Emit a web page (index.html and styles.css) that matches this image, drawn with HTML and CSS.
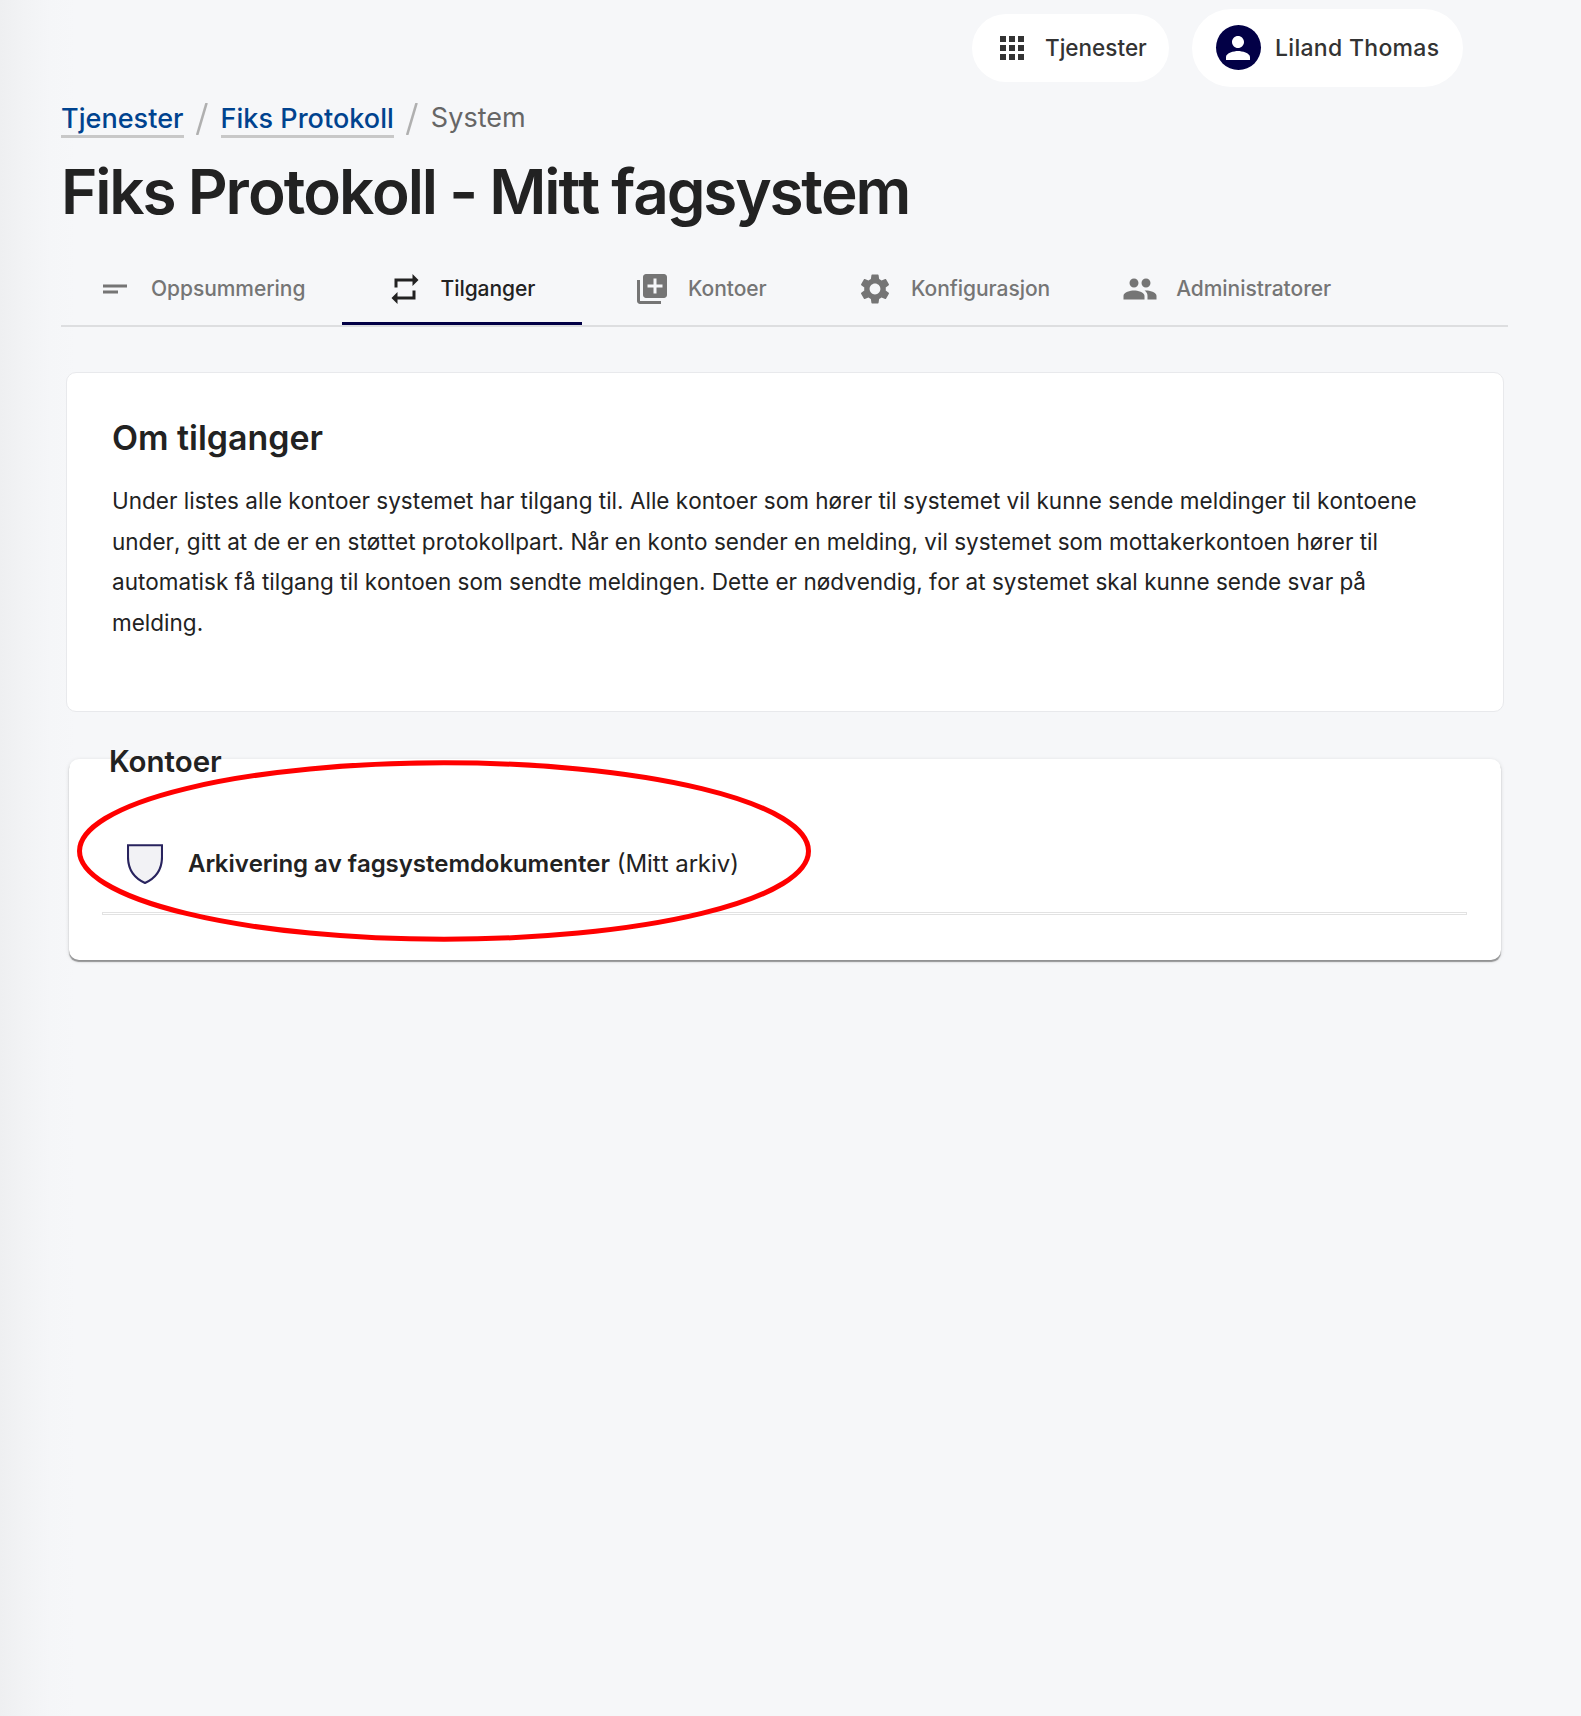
FILE: index.html
```html
<!DOCTYPE html>
<html lang="nb">
<head>
<meta charset="utf-8">
<title>Fiks Protokoll - Mitt fagsystem</title>
<link rel="stylesheet" href="styles.css">
</head>
<body>
<header class="topbar">
  <a class="pill pill-services">
    <svg class="icon" viewBox="0 0 24 24"><path d="M4 8h4V4H4v4zm6 12h4v-4h-4v4zm-6 0h4v-4H4v4zm0-6h4v-4H4v4zm6 0h4v-4h-4v4zm6-10v4h4V4h-4zm-6 4h4V4h-4v4zm6 6h4v-4h-4v4zm0 6h4v-4h-4v4z"/></svg>
    <span class="services-label">Tjenester</span>
  </a>
  <a class="pill pill-user">
    <span class="avatar"><svg class="icon" viewBox="0 0 24 24"><path d="M12 12c2.21 0 4-1.79 4-4s-1.79-4-4-4-4 1.79-4 4 1.79 4 4 4zm0 2c-2.67 0-8 1.34-8 4v2h16v-2c0-2.66-5.33-4-8-4z"/></svg></span>
    <span class="user-name">Liland Thomas</span>
  </a>
</header>
<main class="page">
  <nav class="breadcrumb">
    <a class="crumb-link">Tjenester</a>
    <svg class="slash" viewBox="0 0 12 32"><path d="M10.6 0 1.1 32"/></svg>
    <a class="crumb-link">Fiks Protokoll</a>
    <svg class="slash" viewBox="0 0 12 32"><path d="M10.6 0 1.1 32"/></svg>
    <span class="crumb-current">System</span>
  </nav>
  <h1 class="title">Fiks Protokoll - Mitt fagsystem</h1>
  <nav class="tabs">
    <a class="tab tab-summary"><svg class="icon" viewBox="0 0 24 24"><path d="M4 9h16v2H4zM4 13h10v2H4z"/></svg><span class="tab-label">Oppsummering</span></a>
    <a class="tab tab-active"><svg class="icon" viewBox="0 0 24 24"><path d="M7 7h10v3l4-4-4-4v3H5v6h2V7zm10 10H7v-3l-4 4 4 4v-3h12v-6h-2v4z"/></svg><span class="tab-label">Tilganger</span></a>
    <a class="tab tab-accounts"><svg class="icon" viewBox="0 0 24 24"><path d="M4 6H2v14c0 1.1.9 2 2 2h14v-2H4V6zm16-4H8c-1.1 0-2 .9-2 2v12c0 1.1.9 2 2 2h12c1.1 0 2-.9 2-2V4c0-1.1-.9-2-2-2zm-1 9h-4v4h-2v-4H9V9h4V5h2v4h4v2z"/></svg><span class="tab-label">Kontoer</span></a>
    <a class="tab"><svg class="icon" viewBox="0 0 24 24"><path d="M19.14 12.94c.04-.3.06-.61.06-.94 0-.32-.02-.64-.07-.94l2.03-1.58c.18-.14.23-.41.12-.61l-1.92-3.32c-.12-.22-.37-.29-.59-.22l-2.39.96c-.5-.38-1.03-.7-1.62-.94l-.36-2.54c-.04-.24-.24-.41-.48-.41h-3.84c-.24 0-.43.17-.47.41l-.36 2.54c-.59.24-1.13.57-1.62.94l-2.39-.96c-.22-.08-.47 0-.59.22L2.74 8.87c-.12.21-.08.47.12.61l2.03 1.58c-.05.3-.09.63-.09.94s.02.64.07.94l-2.03 1.58c-.18.14-.23.41-.12.61l1.92 3.32c.12.22.37.29.59.22l2.39-.96c.5.38 1.03.7 1.62.94l.36 2.54c.05.24.24.41.48.41h3.84c.24 0 .44-.17.47-.41l.36-2.54c.59-.24 1.13-.56 1.62-.94l2.39.96c.22.08.47 0 .59-.22l1.92-3.32c.12-.22.07-.47-.12-.61l-2.01-1.58zM12 15.6c-1.98 0-3.6-1.62-3.6-3.6s1.62-3.6 3.6-3.6 3.6 1.62 3.6 3.6-1.62 3.6-3.6 3.6z"/></svg><span class="tab-label">Konfigurasjon</span></a>
    <a class="tab"><svg class="icon" viewBox="0 0 24 24"><path d="M16 11c1.66 0 2.99-1.34 2.99-3S17.66 5 16 5s-3 1.34-3 3 1.34 3 3 3zm-8 0c1.66 0 2.99-1.34 2.99-3S9.66 5 8 5 5 6.34 5 8s1.34 3 3 3zm0 2c-2.33 0-7 1.17-7 3.5V19h14v-2.5c0-2.33-4.67-3.5-7-3.5zm8 0c-.29 0-.62.02-.97.05 1.16.84 1.97 1.97 1.97 3.45V19h6v-2.5c0-2.33-4.67-3.5-7-3.5z"/></svg><span class="tab-label">Administratorer</span></a>
  </nav>
  <section class="card about">
    <h2 class="about-title">Om tilganger</h2>
    <p class="about-text">Under listes alle kontoer systemet har tilgang til. Alle kontoer som hører til systemet vil kunne sende meldinger til kontoene under, gitt at de er en støttet protokollpart. Når en konto sender en melding, vil systemet som mottakerkontoen hører til automatisk få tilgang til kontoen som sendte meldingen. Dette er nødvendig, for at systemet skal kunne sende svar på melding.</p>
  </section>
  <section class="accounts">
    <h2 class="accounts-title">Kontoer</h2>
    <div class="account">
      <svg class="shield" viewBox="0 0 36 40"><path d="M1 1.2H35V13C35 25 30 33.5 18 39 6 33.5 1 25 1 13Z"/></svg>
      <span class="account-name"><b>Arkivering av fagsystemdokumenter</b> (Mitt arkiv)</span>
    </div>
    <hr class="divider">
    <svg class="highlight" viewBox="0 0 734 182"><ellipse cx="367" cy="91" rx="364.5" ry="88.3"/></svg>
  </section>
</main>
</body>
</html>
```
FILE: styles.css
```css
* { box-sizing: border-box; }
body {
  margin: 0;
  min-height: 1716px;
  background: linear-gradient(90deg, #eeeff1 0, #f2f3f5 25px, #f5f6f8 50px, #f6f7f9 76px) #f6f7f9;
  color: #222;
  font-family: "Inter", sans-serif;
}
h1, h2, p { margin: 0; }
.icon { width: 36px; height: 36px; fill: currentColor; flex: none; }

.topbar {
  display: flex;
  justify-content: flex-end;
  align-items: center;
  gap: 23px;
  padding: 9px 118px 0 0;
  height: 87px;
}
.pill {
  display: flex;
  align-items: center;
  background: #fff;
  color: #333;
  font-size: 22.5px;
  font-weight: 500;
  white-space: nowrap;
}
.pill-services { width: 197px; height: 68px; border-radius: 34px; padding-left: 22px; gap: 15px; }
.pill-user { width: 271px; height: 78px; border-radius: 39px; padding-left: 23.5px; gap: 14.5px; }
.services-label { padding-bottom: 2px; }
.user-name { font-size: 23px; letter-spacing: .3px; }
.avatar {
  display: flex;
  align-items: center;
  justify-content: center;
  width: 45px;
  height: 45px;
  margin-bottom: 1px;
  border-radius: 50%;
  background: #020046;
  color: #fff;
}

.page { padding: 15px 73px 0 61px; }
.breadcrumb { display: flex; align-items: flex-start; height: 36px; font-size: 27px; line-height: 33px; letter-spacing: .04px; }
.crumb-link { height: 36px; border-bottom: 3px solid #c8c8c8; color: #00438f; font-weight: 500; }
.slash { width: 12px; height: 32px; margin: 1px 12.5px 0; fill: none; stroke: #b0b0b0; stroke-width: 2.6; }
.crumb-current { color: #666; margin-top: -1px; }

.title { margin-top: 16px; font-size: 62px; line-height: 76px; font-weight: 600; letter-spacing: -2.17px; font-kerning: none; white-space: nowrap; }

.tabs { display: flex; margin-top: 23px; border-bottom: 2px solid #dddee0; color: #757575; font-size: 21px; font-weight: 500; }
.tab { display: flex; align-items: center; gap: 18px; height: 72px; padding: 0 36px; }
.tab-label { padding-bottom: 2px; letter-spacing: -.05px; }
.tab-summary { width: 281px; }
.tab-active { width: 240px; padding-left: 44.5px; color: #222; box-shadow: inset 0 -3px #020046; }
.tab-accounts { width: 239px; padding-left: 52px; }

.card { background: #fff; border: 1px solid #e8e9ec; border-radius: 10px; }
.about { margin: 45px 4px 0 5px; height: 340px; padding: 45px; }
.about-title { font-size: 33.9px; line-height: 40px; font-weight: 600; }
.about-text { margin-top: 23px; font-size: 22.5px; line-height: 40.7px; letter-spacing: .01px; font-kerning: none; }

.accounts {
  position: relative;
  display: flow-root;
  height: 201px;
  margin: 47px 7px 0 8px;
  padding: 0 34px 0 33px;
  border-radius: 10px;
  background: #fff;
  box-shadow: 0 2px 1px -.5px rgba(0, 0, 0, .36), 0 1px 4px rgba(0, 0, 0, .13);
}
.accounts-title { margin: -16px 0 0 7px; font-size: 29.5px; line-height: 36px; font-weight: 600; }
.account { display: flex; align-items: center; height: 96px; margin-top: 37px; padding-left: 25px; gap: 25px; font-size: 24px; font-kerning: none; }
.account-name { padding-bottom: 2px; white-space: nowrap; }
.account-name b { font-weight: 600; letter-spacing: -.07px; }
.shield { width: 36px; height: 40px; fill: #f2f2f5; stroke: #28235e; stroke-width: 2.1; }
.divider { height: 3px; margin: 0; border: 1px solid #e2e2e2; }
.highlight { position: absolute; left: 8px; top: 1px; width: 734px; height: 182px; fill: none; stroke: #f00; stroke-width: 5; }
```
